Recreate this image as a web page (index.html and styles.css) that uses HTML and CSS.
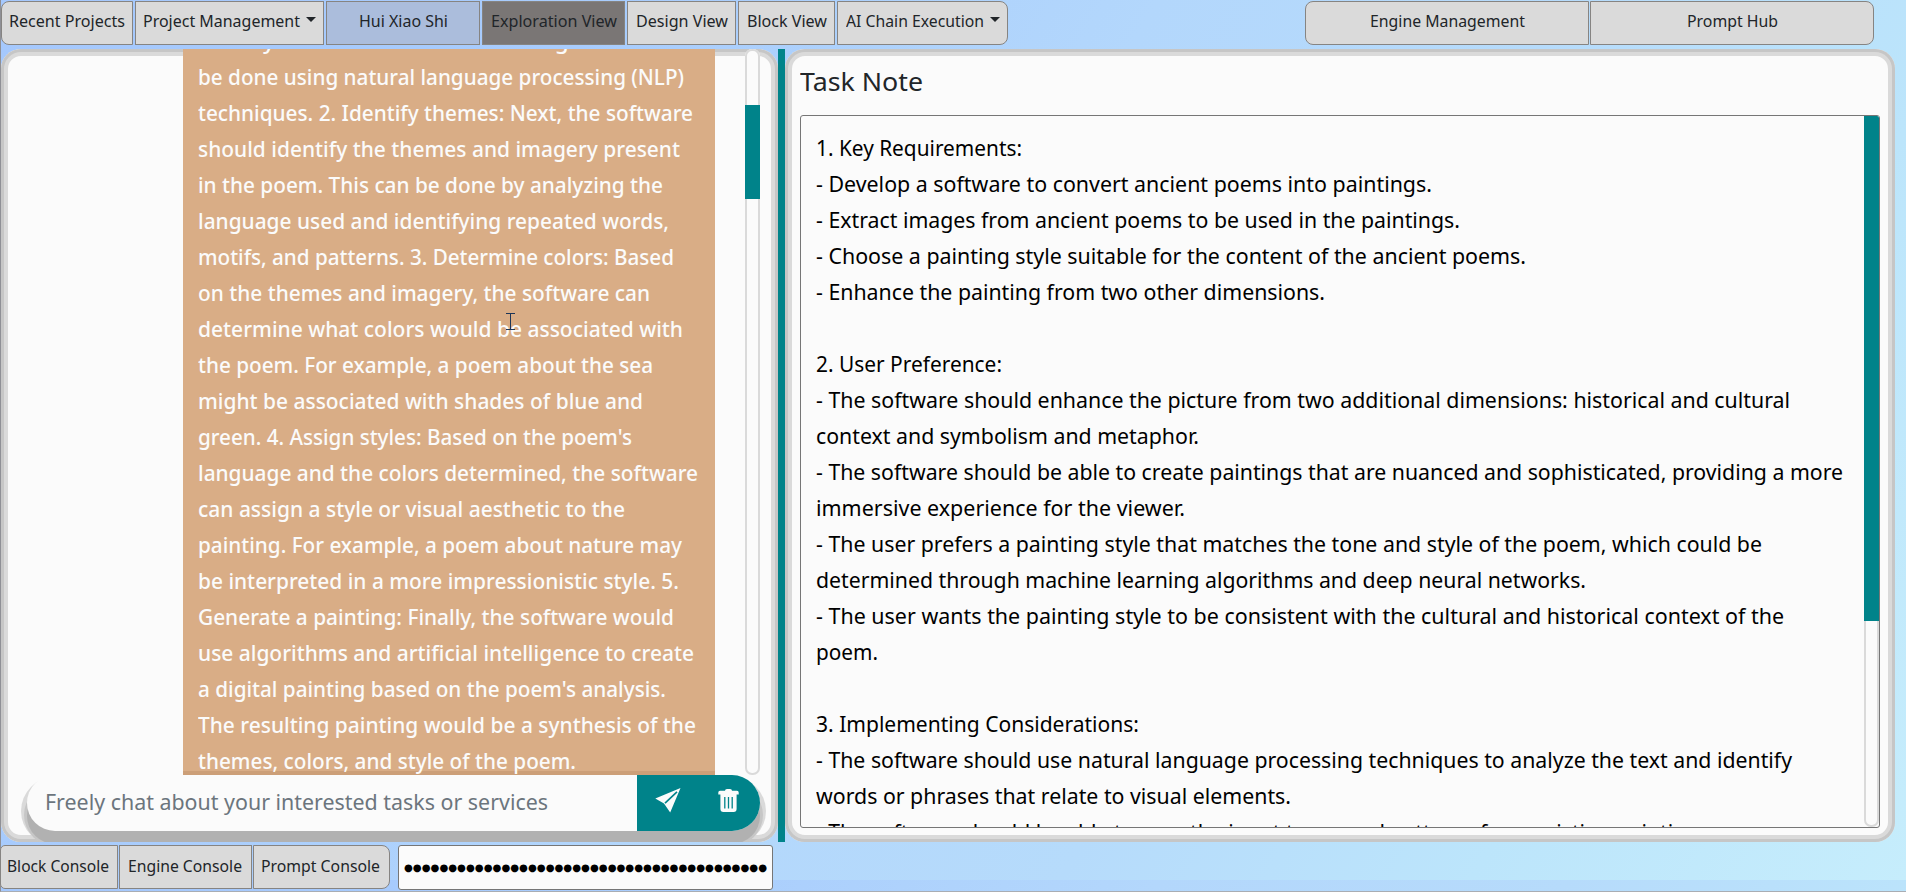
FILE: index.html
```html
<!DOCTYPE html>
<html lang="en">
<head>
<meta charset="utf-8">
<title>Exploration View</title>
<link rel="stylesheet" href="styles.css">
</head>
<body>
<div class="app">
  <header class="toolbar">
    <button class="btn first recent"><span data-w="116">Recent Projects</span></button>
    <button class="btn manage"><span data-w="157">Project Management</span><i class="caret"></i></button>
    <button class="btn project"><span data-w="89">Hui Xiao Shi</span></button>
    <button class="btn active explore"><span data-w="126">Exploration View</span></button>
    <button class="btn design"><span data-w="92">Design View</span></button>
    <button class="btn block"><span data-w="80">Block View</span></button>
    <button class="btn last chain"><span data-w="138">AI Chain Execution</span><i class="caret"></i></button>
    <div class="spacer"></div>
    <button class="btn first wide"><span data-w="155">Engine Management</span></button>
    <button class="btn last wide"><span data-w="91">Prompt Hub</span></button>
  </header>

  <main class="workspace">
    <section class="panel chat">
      <div class="history">
        <div class="bubble">
          <p data-w="470">literary elements and the meaning. This can</p>
          <p data-w="486">be done using natural language processing (NLP)</p>
          <p data-w="495">techniques. 2. Identify themes: Next, the software</p>
          <p data-w="482">should identify the themes and imagery present</p>
          <p data-w="465">in the poem. This can be done by analyzing the</p>
          <p data-w="471">language used and identifying repeated words,</p>
          <p data-w="476">motifs, and patterns. 3. Determine colors: Based</p>
          <p data-w="452">on the themes and imagery, the software can</p>
          <p data-w="485">determine what colors would be associated with</p>
          <p data-w="455">the poem. For example, a poem about the sea</p>
          <p data-w="445">might be associated with shades of blue and</p>
          <p data-w="434">green. 4. Assign styles: Based on the poem's</p>
          <p data-w="500">language and the colors determined, the software</p>
          <p data-w="427">can assign a style or visual aesthetic to the</p>
          <p data-w="484">painting. For example, a poem about nature may</p>
          <p data-w="481">be interpreted in a more impressionistic style. 5.</p>
          <p data-w="476">Generate a painting: Finally, the software would</p>
          <p data-w="496">use algorithms and artificial intelligence to create</p>
          <p data-w="468">a digital painting based on the poem's analysis.</p>
          <p data-w="498">The resulting painting would be a synthesis of the</p>
          <p data-w="378">themes, colors, and style of the poem.</p>
        </div>
        <div class="scroll"><div class="thumb"></div></div>
        <svg class="cursor" width="9" height="17" viewBox="0 0 9 17"><path d="M0 .5h9M4.5 1v15M0 16.5h9" stroke="#1d3557" fill="none"/></svg>
      </div>
      <div class="composer">
        <div class="field"><span data-w="503">Freely chat about your interested tasks or services</span></div>
        <button class="icon send">
          <svg width="26" height="25" viewBox="0 0 26 25"><path d="M25.5 0 .3 10.6 9 15.6 15.2 24.6Z" fill="#fbfbfb"/><path d="M10 15.2 22 3.8" stroke="#00838a" stroke-width="1.6"/></svg>
        </button>
        <button class="icon trash">
          <svg width="21" height="23" viewBox="0 0 21 23"><path d="M7 1.8Q7 0 9 0h3q2 0 2 1.8h5q1.7 0 1.7 1.8v2H.3v-2Q.3 1.8 2 1.8ZM2.4 5.5h16.2V20q0 3-3 3H5.4q-3 0-3-3Z" fill="#fbfbfb"/><path d="M6.8 8v11.5M10.5 8v11.5M14.2 8v11.5" stroke="#00838a" stroke-width="1.3"/></svg>
        </button>
      </div>
    </section>
    <div class="divider"></div>
    <section class="panel note">
      <h1><span data-w="123">Task Note</span></h1>
      <div class="editor">
        <div class="text">
          <p data-w="206">1. Key Requirements:</p>
          <p data-w="616">- Develop a software to convert ancient poems into paintings.</p>
          <p data-w="644">- Extract images from ancient poems to be used in the paintings.</p>
          <p data-w="710">- Choose a painting style suitable for the content of the ancient poems.</p>
          <p data-w="509">- Enhance the painting from two other dimensions.</p>
          <p></p>
          <p data-w="186">2. User Preference:</p>
          <p data-w="974">- The software should enhance the picture from two additional dimensions: historical and cultural</p>
          <p data-w="383">context and symbolism and metaphor.</p>
          <p data-w="1027">- The software should be able to create paintings that are nuanced and sophisticated, providing a more</p>
          <p data-w="369">immersive experience for the viewer.</p>
          <p data-w="946">- The user prefers a painting style that matches the tone and style of the poem, which could be</p>
          <p data-w="770">determined through machine learning algorithms and deep neural networks.</p>
          <p data-w="968">- The user wants the painting style to be consistent with the cultural and historical context of the</p>
          <p data-w="62">poem.</p>
          <p></p>
          <p data-w="323">3. Implementing Considerations:</p>
          <p data-w="976">- The software should use natural language processing techniques to analyze the text and identify</p>
          <p data-w="475">words or phrases that relate to visual elements.</p>
          <p data-w="899">- The software should be able to save the input tones and patterns from existing paintings.</p>
        </div>
        <div class="scroll"><div class="thumb"></div></div>
      </div>
    </section>
  </main>

  <footer class="consoles">
    <button class="btn first bc"><span data-w="102">Block Console</span></button>
    <button class="btn ec"><span data-w="114">Engine Console</span></button>
    <button class="btn last pc"><span data-w="119">Prompt Console</span></button>
    <div class="key"><span data-w="363">●●●●●●●●●●●●●●●●●●●●●●●●●●●●●●●●●●●●●●●●●</span></div>
  </footer>
</div>
<script src="fit.js"></script>
</body>
</html>
```
FILE: styles.css
```css
* { box-sizing: border-box; }
body {
  margin: 0;
  width: 1906px;
  height: 892px;
  overflow: hidden;
  font-family: "Noto Sans", "Open Sans", sans-serif;
  color: #212529;
  background: linear-gradient(120deg, #a5c8fd 0%, #a8ccfd 25%, #b3d7fc 48%, #b6dbfb 65%, #bce5fb 82%, #c6edfc 100%) 0 0 / 100% 880px;
}
.app {
  height: 892px;
  display: flex;
  flex-direction: column;
  border-left: 1px solid #8f9096;
  border-bottom: 1px solid #a9adb3;
}
[data-w] { display: inline-block; white-space: nowrap; }

.btn {
  display: flex;
  align-items: center;
  justify-content: center;
  gap: 6px;
  flex: none;
  height: 44px;
  padding: 0 0 4px;
  font: 17px/24px "Noto Sans", sans-serif;
  color: #212529;
  background: #dadada;
  border: 1px solid #868482;
  border-radius: 0;
}
.btn.first { border-radius: 8px 0 0 8px; }
.btn.last { border-radius: 0 8px 8px 0; }
.btn.project { background: #abbddc; }
.btn.active { background: #7a7675; }
.caret {
  border: 5px solid transparent;
  border-top-color: currentColor;
  border-bottom: 0;
  margin-top: -4px;
}
.toolbar { display: flex; gap: 2px; height: 49px; padding-top: 1px; }
.recent { width: 132px; }
.manage { width: 189px; }
.project { width: 154px; }
.explore { width: 143px; }
.design { width: 109px; }
.block { width: 97px; }
.chain { width: 171px; }
.spacer { flex: 1; }
.wide { width: 284px; }
.toolbar .wide:last-child { margin: 0 32px 0 -1px; }

.workspace { display: flex; height: 794px; }
.panel {
  background: #fbfbfb;
  border-radius: 20px;
  overflow: hidden;
  flex: none;
  box-shadow: inset 0 0 0 3px #c6c6c6, inset 0 0 0 7px #dadada;
}
.chat { width: 777px; }
.history {
  position: relative;
  display: flex;
  justify-content: flex-end;
  height: 726px;
  overflow: hidden;
  padding-right: 18px;
}
.bubble {
  width: 532px;
  height: 726px;
  margin-right: 30px;
  padding-left: 15px;
  color: #fbfbfb;
  background: linear-gradient(#d9ad86 722px, #cc9f78 722px);
  overflow: hidden;
  display: flex;
  flex-direction: column;
  justify-content: flex-end;
}
.bubble p, .text p {
  margin: 0;
  height: 36px;
  flex: none;
  font-size: 22px;
  line-height: 36px;
}
.bubble p { align-self: flex-start; font-weight: 500; }
.bubble p:last-child { margin-bottom: -3px; }
.scroll {
  flex: none;
  width: 15px;
  background: #fbfbfb;
  box-shadow: inset 0 0 0 2px #dadada;
}
.thumb { background: #00838a; }
.history .scroll { border-radius: 7px; }
.history .thumb { margin-top: 56px; height: 94px; }
.cursor { position: absolute; left: 505px; top: 264px; }
.composer {
  position: relative;
  display: flex;
  margin-left: 26px;
  width: 733px;
  height: 56px;
  border-radius: 28px;
  background: #fbfbfb;
  box-shadow: 0 13px 0 0 #b1b1b1, 0 12px 0 3px #c6c6c6, 0 8px 0 6px #dadada;
}
.field {
  width: 610px;
  padding-left: 18px;
  font-size: 22px;
  line-height: 52px;
  color: #6c757d;
}
.icon {
  border: 0;
  padding: 0 0 4px;
  width: 61px;
  display: flex;
  align-items: center;
  justify-content: center;
  background: #00838a;
}
.send { padding: 0 0 4px 1px; }
.trash { width: 62px; padding-right: 2px; border-radius: 0 28px 28px 0; }
.divider { width: 7px; background: #00838a; flex: none; }
.note {
  width: 1110px;
  padding: 10px 0 0 15px;
}
.note h1 { margin: 0; height: 56px; font-size: 26px; font-weight: 400; line-height: 44px; }
.editor {
  display: flex;
  width: 1080px;
  height: 713px;
  border: 1px solid #767676;
  border-radius: 3px;
  color: #000;
  overflow: hidden;
}
.text { width: 1063px; flex: none; padding: 13px 0 0 15px; overflow: hidden; }
.text p { display: block; width: max-content; }
.editor .scroll { border-radius: 0 0 7px 7px; }
.editor .thumb { height: 505px; }

.consoles { display: flex; gap: 1px; padding-top: 3px; height: 49px; }
.consoles .btn { padding: 0 2px 3px 0; }
.bc { width: 118px; margin-left: -1px; }
.ec { width: 133px; }
.pc { width: 137px; }
.consoles .first { border-radius: 5px 0 0 5px; }
.key {
  width: 375px;
  height: 45px;
  margin-left: 7px;
  display: flex;
  align-items: center;
  justify-content: center;
  background: #fbfbfb;
  border: 1px solid #767676;
  border-radius: 3px;
  color: #000;
  font: 10px/20px "DejaVu Sans", sans-serif;
}
```
FILE: fit.js
```js
document.querySelectorAll("[data-w]").forEach(function (el) {
  var centred = el.closest(".btn, .key");
  var natural = el.getBoundingClientRect().width;
  var target = Number(el.dataset.w);
  el.style.transformOrigin = "left center";
  el.style.transform = "scaleX(" + target / natural + ")";
  if (centred) el.style.marginRight = target - natural + "px";
});
```
